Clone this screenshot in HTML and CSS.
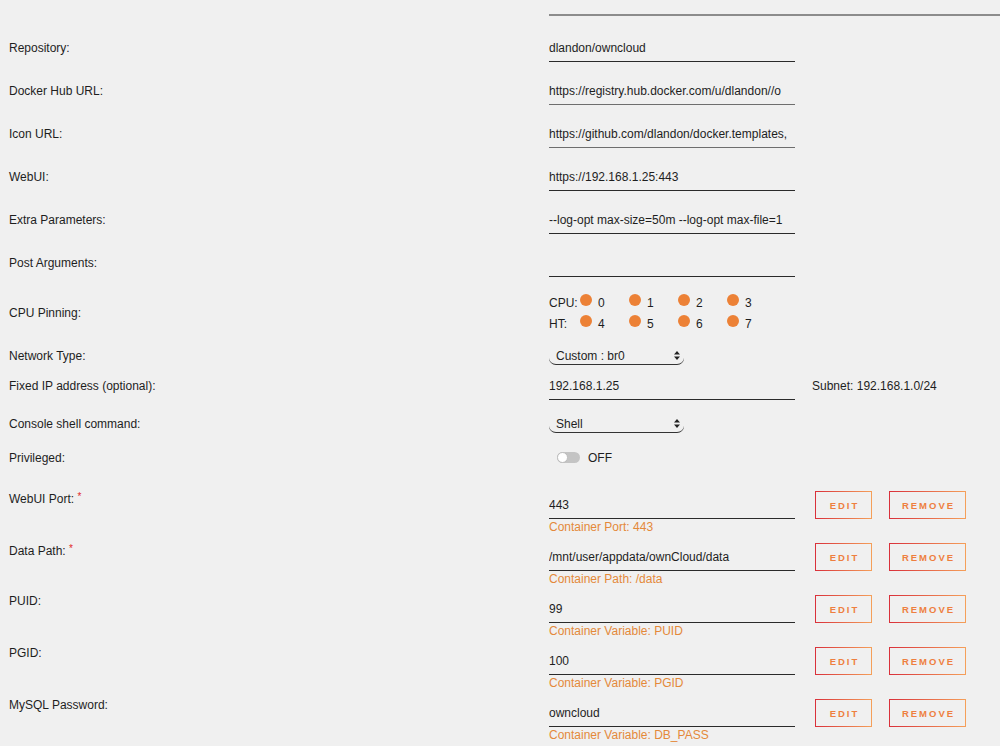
FILE: index.html
```html
<!DOCTYPE html>
<html>
<head>
<meta charset="utf-8">
<link rel="stylesheet" href="styles.css">
</head>
<body>
<div class="form">
  <div class="row row-top"><div></div><div class="topline"></div></div>

  <div class="row"><div class="label">Repository:</div><div class="value"><div class="input">dlandon/owncloud</div></div></div>
  <div class="row"><div class="label">Docker Hub URL:</div><div class="value"><div class="input input-muted">https://registry.hub.docker.com/u/dlandon//o</div></div></div>
  <div class="row"><div class="label">Icon URL:</div><div class="value"><div class="input input-muted">https://github.com/dlandon/docker.templates,</div></div></div>
  <div class="row"><div class="label">WebUI:</div><div class="value"><div class="input">https://192.168.1.25:443</div></div></div>
  <div class="row"><div class="label">Extra Parameters:</div><div class="value"><div class="input">--log-opt max-size=50m --log-opt max-file=1</div></div></div>
  <div class="row"><div class="label">Post Arguments:</div><div class="value"><div class="input"></div></div></div>

  <div class="row row-cpu">
    <div class="label">CPU Pinning:</div>
    <div class="value cpu">
      <div class="cpu-line"><span class="cpu-name">CPU:</span>
        <span class="pin"><span class="dot"></span>0</span>
        <span class="pin"><span class="dot"></span>1</span>
        <span class="pin"><span class="dot"></span>2</span>
        <span class="pin"><span class="dot"></span>3</span>
      </div>
      <div class="cpu-line"><span class="cpu-name">HT:</span>
        <span class="pin"><span class="dot"></span>4</span>
        <span class="pin"><span class="dot"></span>5</span>
        <span class="pin"><span class="dot"></span>6</span>
        <span class="pin"><span class="dot"></span>7</span>
      </div>
    </div>
  </div>

  <div class="row row-select row-network">
    <div class="label label-select">Network Type:</div>
    <div class="value"><div class="select"><span>Custom : br0</span>
      <svg class="arrows" width="6" height="9" viewBox="0 0 6 9"><path d="M3 0 L6 3.5 L0 3.5 Z M0 5.5 L6 5.5 L3 9 Z" fill="#222"/></svg></div></div>
  </div>

  <div class="row"><div class="label">Fixed IP address (optional):</div>
    <div class="value value-inline"><div class="input">192.168.1.25</div><span class="subnet">Subnet: 192.168.1.0/24</span></div></div>

  <div class="row row-select row-console">
    <div class="label label-select">Console shell command:</div>
    <div class="value"><div class="select"><span>Shell</span>
      <svg class="arrows" width="6" height="9" viewBox="0 0 6 9"><path d="M3 0 L6 3.5 L0 3.5 Z M0 5.5 L6 5.5 L3 9 Z" fill="#222"/></svg></div></div>
  </div>

  <div class="row row-priv">
    <div class="label label-priv">Privileged:</div>
    <div class="value toggle-line"><span class="toggle"><span class="knob"></span></span><span>OFF</span></div>
  </div>

  <div class="row row-port">
    <div class="label label-port">WebUI Port: <span class="req">*</span></div>
    <div class="value port">
      <div class="port-field"><div class="input">443</div><div class="sub">Container Port: 443</div></div>
      <button class="btn btn-edit">EDIT</button><button class="btn btn-remove">REMOVE</button>
    </div>
  </div>
  <div class="row row-port">
    <div class="label label-port">Data Path: <span class="req">*</span></div>
    <div class="value port">
      <div class="port-field"><div class="input">/mnt/user/appdata/ownCloud/data</div><div class="sub">Container Path: /data</div></div>
      <button class="btn btn-edit">EDIT</button><button class="btn btn-remove">REMOVE</button>
    </div>
  </div>
  <div class="row row-port">
    <div class="label label-port">PUID:</div>
    <div class="value port">
      <div class="port-field"><div class="input">99</div><div class="sub">Container Variable: PUID</div></div>
      <button class="btn btn-edit">EDIT</button><button class="btn btn-remove">REMOVE</button>
    </div>
  </div>
  <div class="row row-port">
    <div class="label label-port">PGID:</div>
    <div class="value port">
      <div class="port-field"><div class="input">100</div><div class="sub">Container Variable: PGID</div></div>
      <button class="btn btn-edit">EDIT</button><button class="btn btn-remove">REMOVE</button>
    </div>
  </div>
  <div class="row row-port">
    <div class="label label-port">MySQL Password:</div>
    <div class="value port">
      <div class="port-field"><div class="input">owncloud</div><div class="sub">Container Variable: DB_PASS</div></div>
      <button class="btn btn-edit">EDIT</button><button class="btn btn-remove">REMOVE</button>
    </div>
  </div>
</div>
</body>
</html>
```

FILE: styles.css
```css
html, body {
  margin: 0;
  padding: 0;
  background: #f0f0f0;
  height: 746px;
  overflow: hidden;
}
body {
  font-family: "Liberation Sans", Arial, sans-serif;
  font-size: 12px;
  color: #1e1e1e;
}
.form {
  padding-left: 9px;
}
.row {
  display: grid;
  grid-template-columns: 540px 1fr;
  height: 43px;
  align-items: start;
}
.row-top {
  height: 2px;
  margin-top: 14px;
  margin-bottom: 18px;
}
.topline {
  height: 2px;
  background: #8c8c8c;
}
.label {
  line-height: 28px;
  white-space: nowrap;
}
.input {
  width: 246px;
  height: 28px;
  box-sizing: border-box;
  border-bottom: 1px solid #2a2a2a;
  line-height: 28px;
  white-space: nowrap;
  overflow: hidden;
}
.input-muted {
  border-bottom-color: #6e6e6e;
}
.value-inline {
  display: flex;
  align-items: flex-start;
}
.subnet {
  margin-left: 17px;
  line-height: 28px;
}

/* CPU pinning */
.row-cpu {
  height: 42px;
}
.row-cpu .label {
  line-height: 42px;
}
.cpu-line {
  display: flex;
  align-items: center;
  height: 21px;
}
.cpu-name {
  width: 31px;
}
.pin {
  display: flex;
  align-items: center;
  width: 49px;
}
.dot {
  width: 12px;
  height: 12px;
  border-radius: 50%;
  background: #ec8136;
  margin-right: 6px;
  margin-bottom: 5px;
}

/* selects */
.row-select {
  align-items: start;
}
.row-network {
  padding-top: 13px;
  height: 38px;
  box-sizing: border-box;
}
.row-console {
  height: 30px;
}
.label-select {
  line-height: 18px;
}
.select {
  width: 135px;
  height: 18px;
  box-sizing: border-box;
  border-bottom: 1px solid #333;
  border-radius: 0 0 7px 7px;
  display: flex;
  align-items: center;
  justify-content: space-between;
  padding: 0 4px 0 7px;
}
.arrows {
  display: block;
}

/* toggle */
.row-priv {
  height: 46px;
}
.label-priv {
  line-height: 26px;
}
.toggle-line {
  display: flex;
  align-items: center;
  height: 26px;
  padding-left: 8px;
}
.toggle {
  width: 23px;
  height: 11px;
  border-radius: 6px;
  background: #c4c4c4;
  display: flex;
  align-items: center;
  margin-right: 8px;
  margin-bottom: 2px;
}
.knob {
  width: 11px;
  height: 11px;
  box-sizing: border-box;
  border-radius: 50%;
  background: #fff;
  border: 1px solid #bdbdbd;
}

/* port rows */
.row-port {
  height: 52px;
}
.label-port {
  line-height: 14px;
  margin-top: -1px;
}
.req {
  color: #e22828;
  font-size: 10px;
  vertical-align: 3px;
}
.port {
  display: flex;
  align-items: flex-start;
}
.sub {
  line-height: 17px;
  color: #e4893a;
}
.btn {
  height: 28px;
  box-sizing: border-box;
  border: 1px solid transparent;
  border-image: linear-gradient(90deg, #d9303a, #f5a05a) 1;
  background: transparent;
  font-family: "Liberation Sans", Arial, sans-serif;
  font-weight: bold;
  font-size: 9.5px;
  letter-spacing: 2px;
  color: #ee7f3f;
  padding: 0 0 0 2px;
  margin: 0;
}
.btn-edit {
  width: 57px;
  margin-left: 20px;
}
.btn-remove {
  width: 77px;
  margin-left: 17px;
}
```
